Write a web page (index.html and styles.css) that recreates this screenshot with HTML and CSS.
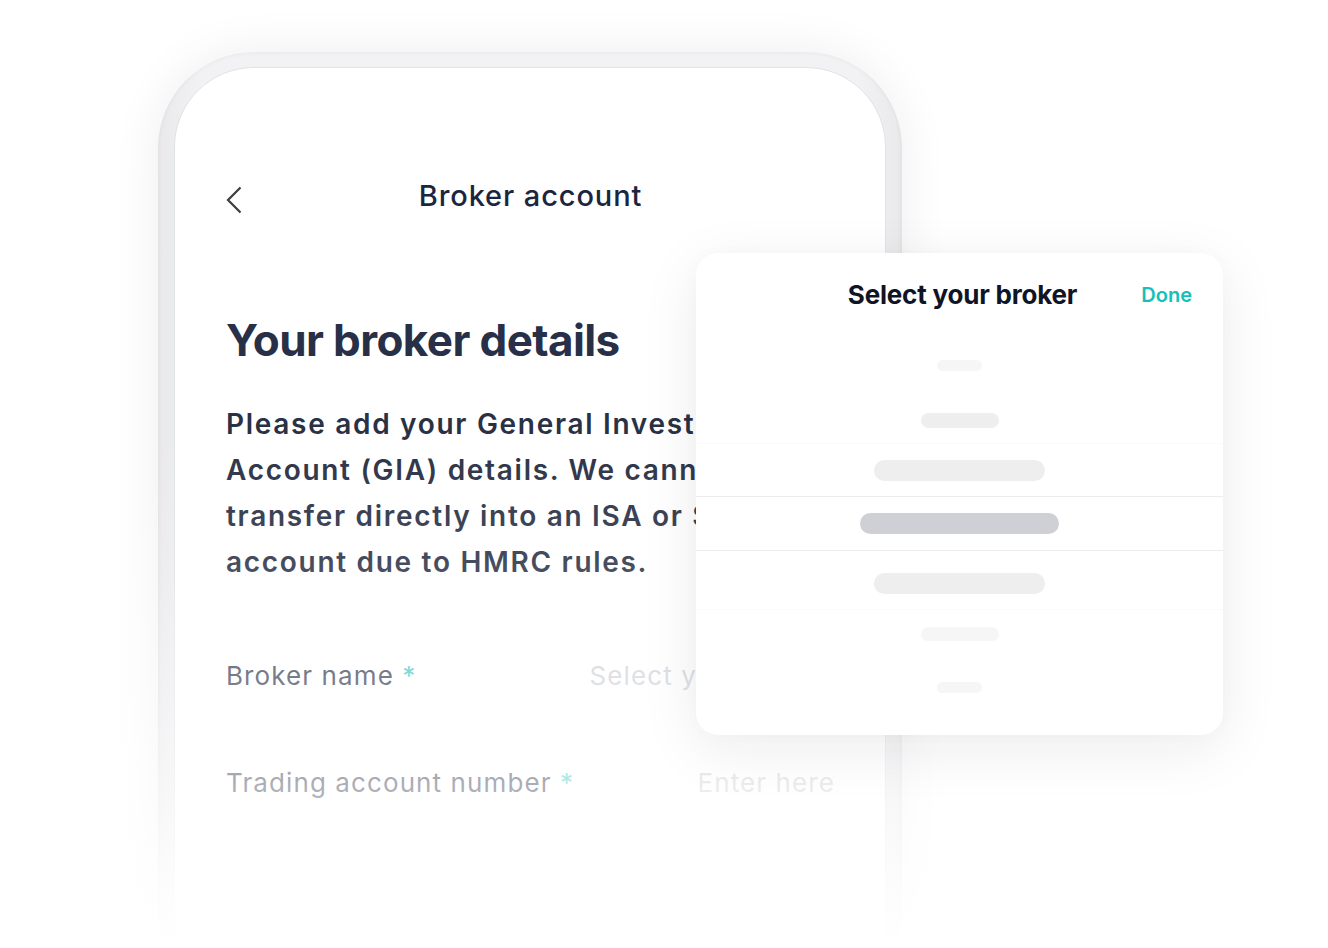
FILE: index.html
```html
<!DOCTYPE html>
<html lang="en">
<head>
    <meta charset="UTF-8">
    <meta name="viewport" content="width=device-width, initial-scale=1.0">
    <title>Broker account</title>
    <link rel="stylesheet" href="styles.css">
</head>
<body>
    <div class="scene">
        <div class="phone">
            <div class="screen">
                <header class="topbar">
                    <svg class="back" width="16" height="28" viewBox="0 0 16 28">
                        <path d="M14.5 1.5 L2 14 L14.5 26.5" fill="none" stroke="#3c3c3f" stroke-width="2.2"/>
                    </svg>
                    <div class="title">Broker account</div>
                    <span></span>
                </header>
                <h1 class="heading">Your broker details</h1>
                <p class="intro">Please add your General Investment<br>Account (GIA) details. We cannot<br>transfer directly into an ISA or SIPP<br>account due to HMRC rules.</p>
                <div class="field">
                    <div class="label">Broker name <span class="req">*</span></div>
                    <div class="value">Select your broker</div>
                </div>
                <div class="field">
                    <div class="label">Trading account number <span class="req">*</span></div>
                    <div class="value">Enter here</div>
                </div>
            </div>
        </div>
        <div class="fade"></div>

        <div class="picker">
            <div class="picker-head">
                <span></span>
                <div class="picker-title">Select your broker</div>
                <div class="done">Done</div>
            </div>
            <div class="row r1"><div class="bar"></div></div>
            <div class="row r2"><div class="bar"></div></div>
            <div class="row r3"><div class="bar"></div></div>
            <div class="row r4"><div class="bar"></div></div>
            <div class="row r5"><div class="bar"></div></div>
            <div class="row r6"><div class="bar"></div></div>
            <div class="row r7"><div class="bar"></div></div>
        </div>
    </div>
</body>
</html>
```

FILE: styles.css
```css
body{
    margin: 0;
    padding: 0;
    background-color: #fff;
    font-family: Inter, "Noto Sans", sans-serif;
    overflow: hidden;
}
.scene{
    position: relative;
    width: 1328px;
    height: 948px;
    overflow: hidden;
}
/* phone */
.phone{
    margin: 52px 0 0 158px;
    width: 744px;
    height: 960px;
    box-sizing: border-box;
    padding: 15px 16px 0 16px;
    border-radius: 96px;
    background: linear-gradient(to right, #e9e9ec, #f2f2f4 6%, #f2f2f4 94%, #e9e9ec);
    box-shadow: 0 0 50px rgba(30, 30, 60, 0.07), inset 0 0 5px rgba(0, 0, 0, 0.06);
}
.screen{
    height: 100%;
    box-sizing: border-box;
    background-color: #fff;
    border: 1px solid #dfe4e4;
    border-radius: 80px;
    padding: 0 50px 0 51px;
}
.topbar{
    display: grid;
    grid-template-columns: 40px 1fr 40px;
    height: 40px;
    padding-top: 108px;
}
.back{
    margin-top: 10px;
}
.title{
    text-align: center;
    font-size: 29px;
    line-height: 40px;
    font-weight: 500;
    letter-spacing: 0.9px;
    color: #1c2540;
}
.heading{
    margin: 98px 0 0 0;
    font-size: 44px;
    line-height: 52px;
    font-weight: 700;
    letter-spacing: -0.6px;
    color: #283048;
}
.intro{
    margin: 35px 0 0 0;
    font-size: 28px;
    line-height: 46px;
    font-weight: 600;
    letter-spacing: 1.7px;
    white-space: nowrap;
    color: #2a3145;
}
.field{
    display: flex;
    justify-content: space-between;
    margin-top: 73px;
    font-size: 26px;
    line-height: 36px;
    letter-spacing: 1.1px;
}
.field + .field{
    margin-top: 71px;
}
.label{
    color: #2e344a;
}
.req{
    color: #37c8bf;
}
.value{
    color: #ced0d5;
}
.fade{
    position: absolute;
    left: 0;
    top: 0;
    width: 100%;
    height: 100%;
    background: linear-gradient(to bottom,
        rgba(255, 255, 255, 0) 430px,
        rgba(255, 255, 255, 0.13) 560px,
        rgba(255, 255, 255, 0.36) 680px,
        rgba(255, 255, 255, 0.6) 785px,
        rgba(255, 255, 255, 0.86) 880px,
        #fff 948px);
}
/* broker picker */
.picker{
    position: absolute;
    left: 696px;
    top: 253px;
    width: 527px;
    height: 482px;
    background-color: #fff;
    border-radius: 22px;
    box-shadow: 0 14px 60px rgba(20, 20, 40, 0.08), 0 0 20px rgba(0, 0, 0, 0.02);
}
.picker-head{
    display: grid;
    grid-template-columns: 1fr auto 1fr;
    height: 85px;
    box-sizing: border-box;
    padding-top: 26px;
}
.picker-title{
    margin-left: 6px;
    font-size: 26px;
    line-height: 32px;
    font-weight: 700;
    letter-spacing: -0.2px;
    color: #0f1426;
}
.done{
    justify-self: end;
    padding-right: 31px;
    font-size: 20px;
    line-height: 32px;
    font-weight: 600;
    color: #12c2b8;
}
.row{
    box-sizing: border-box;
    display: flex;
    justify-content: center;
}
.bar{
    border-radius: 12px;
    background-color: #eeeeee;
}
.r1{ height: 55px; padding-top: 22px; }
.r1 .bar{ width: 45px; height: 11px; background-color: #f6f6f6; }
.r2{ height: 50px; padding-top: 20px; }
.r2 .bar{ width: 78px; height: 15px; }
.r3{ height: 53px; padding-top: 16px; border-top: 1px solid #fbfbfb; }
.r3 .bar{ width: 171px; height: 21px; }
.r4{ height: 55px; padding-top: 16px; border-top: 1px solid #ececef; border-bottom: 1px solid #ececef; }
.r4 .bar{ width: 199px; height: 21px; background-color: #cfd0d5; }
.r5{ height: 58px; padding-top: 22px; }
.r5 .bar{ width: 171px; height: 21px; }
.r6{ height: 52px; padding-top: 17px; border-top: 1px solid #fbfbfb; }
.r6 .bar{ width: 78px; height: 14px; background-color: #f6f6f6; }
.r7{ height: 53px; padding-top: 21px; }
.r7 .bar{ width: 45px; height: 11px; background-color: #f6f6f6; }
```
